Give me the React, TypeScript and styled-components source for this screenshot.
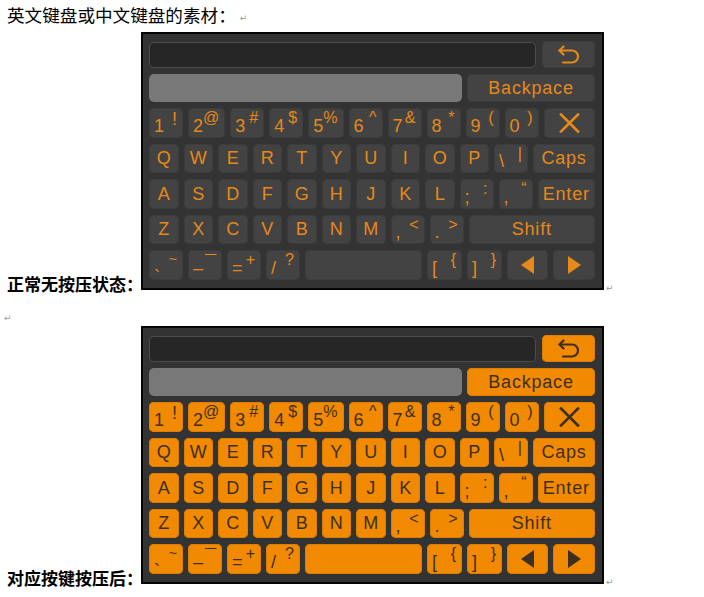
import React from 'react';
import styled, { createGlobalStyle } from 'styled-components';

const GlobalStyle = createGlobalStyle`
  html, body {
    margin: 0;
    padding: 0;
    background: #ffffff;
  }
  body {
    font-family: "Noto Sans CJK SC", sans-serif;
    color: #000000;
  }
`;

const Page = styled.div`
  width: 704px;
  height: 597px;
  box-sizing: border-box;
  padding-left: 7px;
  overflow: hidden;
`;

const Heading = styled.div`
  height: 32px;
  box-sizing: border-box;
  padding-top: 3px;
  display: flex;
  align-items: flex-start;
  font-size: 17.6px;
  line-height: 24px;
  white-space: nowrap;
`;

const Mark = styled.span`
  font-family: "DejaVu Sans", sans-serif;
  font-size: 9px;
  line-height: 10px;
  color: #9a9a9a;
`;

const HeadMark = styled(Mark)`
  margin-left: 4px;
  margin-top: 10px;
`;

const Line = styled.div`
  display: flex;
  align-items: flex-end;
`;

const Caption = styled.div`
  flex: none;
  width: 134px;
  min-width: 0;
  font-size: 17px;
  font-weight: 700;
  line-height: 20px;
  margin-bottom: -4px;
  white-space: nowrap;
`;

const TailMark = styled(Mark)`
  margin-left: 2px;
  margin-bottom: -3px;
`;

const Spacer = styled.div`
  height: 36px;
  display: flex;
  align-items: flex-end;
  padding-bottom: 3px;
  box-sizing: border-box;
  margin-left: -3px;
`;

const Frame = styled.div`
  flex: 0 0 463px;
  box-sizing: border-box;
  border: 2px solid #050505;
  background: #333333;
  padding: 7px 7px 8.5px 6px;
  display: flex;
  flex-direction: column;
  gap: 6px;
`;

const TopRow = styled.div`
  display: flex;
  gap: 6px;
  height: 27px;
`;

const Field = styled.div`
  flex: 1 1 0;
  margin-top: 1px;
  box-sizing: border-box;
  background: #262626;
  border: 1px solid #4c4c4c;
  border-radius: 5px;
`;

const BarRow = styled.div`
  display: flex;
  gap: 5px;
  height: 28px;
`;

const Preview = styled.div`
  flex: 1 1 0;
  background: #787878;
  border-radius: 5px;
`;

const KeyRow = styled.div`
  display: flex;
  gap: 5px;
  height: 29.5px;
`;

const Key = styled.div<{ $on: boolean; $w?: number; $word?: boolean }>`
  flex: ${(p) => (p.$w ? `0 0 ${p.$w}px` : '1 1 0')};
  box-sizing: border-box;
  border-radius: 5px;
  background: ${(p) => (p.$on ? '#f18a00' : '#434343')};
  color: ${(p) => (p.$on ? '#3d2f1d' : '#e6891b')};
  box-shadow: inset 0 0 0 1px ${(p) => (p.$on ? '#dc7e02' : '#3c3c3c')};
  display: flex;
  align-items: center;
  justify-content: center;
  font-family: "Liberation Sans", Arial, sans-serif;
  font-size: 18px;
  line-height: 1;
  letter-spacing: ${(p) => (p.$word ? '0.8px' : '0')};
`;

const DualKey = styled(Key)`
  justify-content: space-between;
  align-items: stretch;
  padding: 2px 6px 3px 5px;
`;

const Main = styled.span<{ $drop?: number }>`
  align-self: flex-end;
  font-size: 18px;
  line-height: 1;
  transform: translateY(${(p) => p.$drop ?? 0}px);
`;

const Sub = styled.span<{ $size?: number }>`
  align-self: flex-start;
  font-size: ${(p) => p.$size ?? 16}px;
  line-height: 1;
`;

const Icon = styled.svg`
  display: block;
`;

function UndoIcon() {
  return (
    <Icon width="24" height="19" viewBox="0 0 24 19" fill="none" stroke="currentColor" strokeWidth="2.2" strokeLinecap="round" strokeLinejoin="round">
      <path d="M6.5 1.5 L2.5 5.5 L6.5 9.5" />
      <path d="M2.5 5.5 H15 A6 6 0 0 1 15 17.5 H6" />
    </Icon>
  );
}

function CloseIcon() {
  return (
    <Icon width="21" height="20" viewBox="0 0 21 20" fill="none" stroke="currentColor" strokeWidth="2.6" strokeLinecap="square">
      <path d="M2 1.5 L19 18.5 M19 1.5 L2 18.5" />
    </Icon>
  );
}

function Arrow({ dir }: { dir: 'left' | 'right' }) {
  return (
    <Icon width="13" height="18" viewBox="0 0 13 18" fill="currentColor">
      {dir === 'left' ? <path d="M13 0 V18 L0 9 Z" /> : <path d="M0 0 V18 L13 9 Z" />}
    </Icon>
  );
}

type Pair = { main: string; sub: string; drop?: number; size?: number; w?: number };

const numberKeys: Pair[] = [
  { main: '1', sub: '!', size: 18 },
  { main: '2', sub: '@' },
  { main: '3', sub: '#' },
  { main: '4', sub: '$' },
  { main: '5', sub: '%' },
  { main: '6', sub: '^' },
  { main: '7', sub: '&' },
  { main: '8', sub: '*' },
  { main: '9', sub: '(' },
  { main: '0', sub: ')' },
];

const rowQ = 'QWERTYUIOP'.split('');
const rowA = 'ASDFGHJKL'.split('');
const rowZ = 'ZXCVBNM'.split('');

const bottomKeys: Pair[] = [
  { main: '`', sub: '~', drop: 9, size: 14 },
  { main: '–', sub: '¯', size: 20 },
  { main: '=', sub: '+' },
  { main: '/', sub: '?' },
];

function Dual({ on, k, w = 34 }: { on: boolean; k: Pair; w?: number }) {
  return (
    <DualKey $on={on} $w={k.w ?? w}>
      <Main $drop={k.drop}>{k.main}</Main>
      <Sub $size={k.size}>{k.sub}</Sub>
    </DualKey>
  );
}

function Board({ on }: { on: boolean }) {
  return (
    <Frame>
      <TopRow>
        <Field />
        <Key $on={on} $w={53}>
          <UndoIcon />
        </Key>
      </TopRow>
      <BarRow>
        <Preview />
        <Key $on={on} $w={128} $word>
          Backpace
        </Key>
      </BarRow>
      <KeyRow>
        {numberKeys.map((k) => (
          <Dual key={k.main} on={on} k={k} />
        ))}
        <Key $on={on}>
          <CloseIcon />
        </Key>
      </KeyRow>
      <KeyRow>
        {rowQ.map((c) => (
          <Key key={c} $on={on} $w={29.5}>
            {c}
          </Key>
        ))}
        <Dual on={on} k={{ main: '\\', sub: '|' }} />
        <Key $on={on} $word>
          Caps
        </Key>
      </KeyRow>
      <KeyRow>
        {rowA.map((c) => (
          <Key key={c} $on={on} $w={29.5}>
            {c}
          </Key>
        ))}
        <Dual on={on} k={{ main: ';', sub: ':' }} />
        <Dual on={on} k={{ main: ',', sub: '“' }} />
        <Key $on={on} $word>
          Enter
        </Key>
      </KeyRow>
      <KeyRow>
        {rowZ.map((c) => (
          <Key key={c} $on={on} $w={29.5}>
            {c}
          </Key>
        ))}
        <Dual on={on} k={{ main: ',', sub: '<' }} />
        <Dual on={on} k={{ main: '.', sub: '>' }} />
        <Key $on={on} $word>
          Shift
        </Key>
      </KeyRow>
      <KeyRow>
        {bottomKeys.map((k) => (
          <Dual key={k.main} on={on} k={k} />
        ))}
        <Key $on={on} $w={117} />
        <Dual on={on} k={{ main: '[', sub: '{', w: 35 }} />
        <Dual on={on} k={{ main: ']', sub: '}', w: 35 }} />
        <Key $on={on} $w={41}>
          <Arrow dir="left" />
        </Key>
        <Key $on={on}>
          <Arrow dir="right" />
        </Key>
      </KeyRow>
    </Frame>
  );
}

export default function App() {
  return (
    <Page>
      <GlobalStyle />
      <Heading>
        英文键盘或中文键盘的素材：<HeadMark>↵</HeadMark>
      </Heading>
      <Line>
        <Caption>正常无按压状态：</Caption>
        <Board on={false} />
        <TailMark>↵</TailMark>
      </Line>
      <Spacer>
        <Mark>↵</Mark>
      </Spacer>
      <Line>
        <Caption>对应按键按压后：</Caption>
        <Board on />
        <TailMark>↵</TailMark>
      </Line>
    </Page>
  );
}
